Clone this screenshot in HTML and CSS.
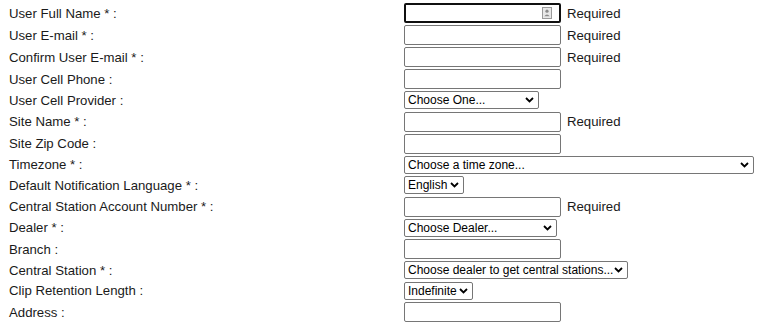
FILE: index.html
```html
<!DOCTYPE html>
<html lang="en">
<head>
  <meta charset="UTF-8" />
  <title>Add User</title>
  <link rel="stylesheet" href="styles.css">
</head>
<body>
  <form id="userForm">
    <table class="form-table">
      <tr class="row-input">
        <td class="label">User Full Name * :</td>
        <td><span class="field-wrap"><input type="text" class="text focused" name="fullname" /><svg class="autofill" width="10" height="12" viewBox="0 0 10 12">
              <rect x="0.5" y="0.5" width="9" height="11" fill="#e8e8e8" stroke="#9a9a9a"/>
              <circle cx="5" cy="4.2" r="1.6" fill="#8a8a8a"/>
              <path d="M2.3 9.2 Q5 5.8 7.7 9.2 Z" fill="#8a8a8a"/>
            </svg></span><span class="req">Required</span></td>
      </tr>
      <tr class="row-input">
        <td class="label">User E-mail * :</td>
        <td><input type="text" class="text" name="email" /><span class="req">Required</span></td>
      </tr>
      <tr class="row-input">
        <td class="label">Confirm User E-mail * :</td>
        <td><input type="text" class="text" name="email2" /><span class="req">Required</span></td>
      </tr>
      <tr class="row-input">
        <td class="label">User Cell Phone :</td>
        <td><input type="text" class="text" name="cell" /></td>
      </tr>
      <tr class="row-select">
        <td class="label">User Cell Provider :</td>
        <td>
          <span class="sel-wrap w-provider">
            <select class="sel" name="provider"><option>Choose One...</option></select>
            <svg class="chev" width="9" height="6" viewBox="0 0 9 6"><path d="M1 1 L4.5 4.5 L8 1" fill="none" stroke="#000" stroke-width="1.8"/></svg>
          </span>
        </td>
      </tr>
      <tr class="row-input">
        <td class="label">Site Name * :</td>
        <td><input type="text" class="text" name="site" /><span class="req">Required</span></td>
      </tr>
      <tr class="row-input">
        <td class="label">Site Zip Code :</td>
        <td><input type="text" class="text" name="zip" /></td>
      </tr>
      <tr class="row-select">
        <td class="label">Timezone * :</td>
        <td>
          <span class="sel-wrap w-tz">
            <select class="sel" name="timezone"><option>Choose a time zone...</option></select>
            <svg class="chev" width="9" height="6" viewBox="0 0 9 6"><path d="M1 1 L4.5 4.5 L8 1" fill="none" stroke="#000" stroke-width="1.8"/></svg>
          </span>
        </td>
      </tr>
      <tr class="row-select">
        <td class="label">Default Notification Language * :</td>
        <td>
          <span class="sel-wrap w-lang">
            <select class="sel" name="lang"><option>English</option></select>
            <svg class="chev" width="9" height="6" viewBox="0 0 9 6"><path d="M1 1 L4.5 4.5 L8 1" fill="none" stroke="#000" stroke-width="1.8"/></svg>
          </span>
        </td>
      </tr>
      <tr class="row-input">
        <td class="label">Central Station Account Number * :</td>
        <td><input type="text" class="text" name="account" /><span class="req">Required</span></td>
      </tr>
      <tr class="row-select">
        <td class="label">Dealer * :</td>
        <td>
          <span class="sel-wrap w-dealer">
            <select class="sel" name="dealer"><option>Choose Dealer...</option></select>
            <svg class="chev" width="9" height="6" viewBox="0 0 9 6"><path d="M1 1 L4.5 4.5 L8 1" fill="none" stroke="#000" stroke-width="1.8"/></svg>
          </span>
        </td>
      </tr>
      <tr class="row-input">
        <td class="label">Branch :</td>
        <td><input type="text" class="text" name="branch" /></td>
      </tr>
      <tr class="row-select">
        <td class="label">Central Station * :</td>
        <td>
          <span class="sel-wrap w-station">
            <select class="sel" name="station"><option>Choose dealer to get central stations...</option></select>
            <svg class="chev" width="9" height="6" viewBox="0 0 9 6"><path d="M1 1 L4.5 4.5 L8 1" fill="none" stroke="#000" stroke-width="1.8"/></svg>
          </span>
        </td>
      </tr>
      <tr class="row-select">
        <td class="label">Clip Retention Length :</td>
        <td>
          <span class="sel-wrap w-clip">
            <select class="sel" name="clip"><option>Indefinite</option></select>
            <svg class="chev" width="9" height="6" viewBox="0 0 9 6"><path d="M1 1 L4.5 4.5 L8 1" fill="none" stroke="#000" stroke-width="1.8"/></svg>
          </span>
        </td>
      </tr>
      <tr class="row-input">
        <td class="label">Address :</td>
        <td><input type="text" class="text" name="address" /></td>
      </tr>
    </table>
  </form>
</body>
</html>
```

FILE: styles.css
```css
body {
  margin: 0;
  padding: 2px 8px 0;
  background: #ffffff;
  font-family: "Liberation Sans", Arial, sans-serif;
  font-size: 13.2px;
  color: #1a1a1a;
}

.form-table {
  border-collapse: collapse;
}

.form-table td {
  padding: 0;
  vertical-align: middle;
  white-space: nowrap;
}

.form-table td.label {
  width: 395px;
  padding-left: 1px;
}

.row-input td {
  height: 22px;
}

.row-select td {
  height: 20.5px;
}

.text {
  box-sizing: border-box;
  width: 157px;
  height: 20px;
  margin: 0;
  padding: 1px 3px;
  border: 1px solid #767676;
  border-radius: 2px;
  font-family: inherit;
  font-size: 13.2px;
  vertical-align: middle;
}

.text.focused {
  border: 2px solid #101010;
}

.field-wrap {
  position: relative;
  display: inline-block;
  vertical-align: middle;
}

.autofill {
  position: absolute;
  right: 9px;
  top: 4px;
}

.req {
  margin-left: 6px;
  vertical-align: middle;
  color: #1a1a1a;
}

.sel-wrap {
  position: relative;
  display: inline-block;
  vertical-align: middle;
}

.sel {
  -webkit-appearance: none;
  appearance: none;
  box-sizing: border-box;
  width: 100%;
  height: 18px;
  margin: 0;
  padding: 0 12px 0 3px;
  border: 1px solid #767676;
  border-radius: 2px;
  background: #ffffff;
  color: #000000;
  font-family: inherit;
  font-size: 12px;
  line-height: 16px;
  display: block;
}

.chev {
  position: absolute;
  right: 5px;
  top: 6px;
  pointer-events: none;
}

.w-provider { width: 135px; }
.w-tz { width: 350px; }
.w-lang { width: 60px; }
.w-dealer { width: 153px; }
.w-station { width: 224px; }
.w-clip { width: 69px; }
```
